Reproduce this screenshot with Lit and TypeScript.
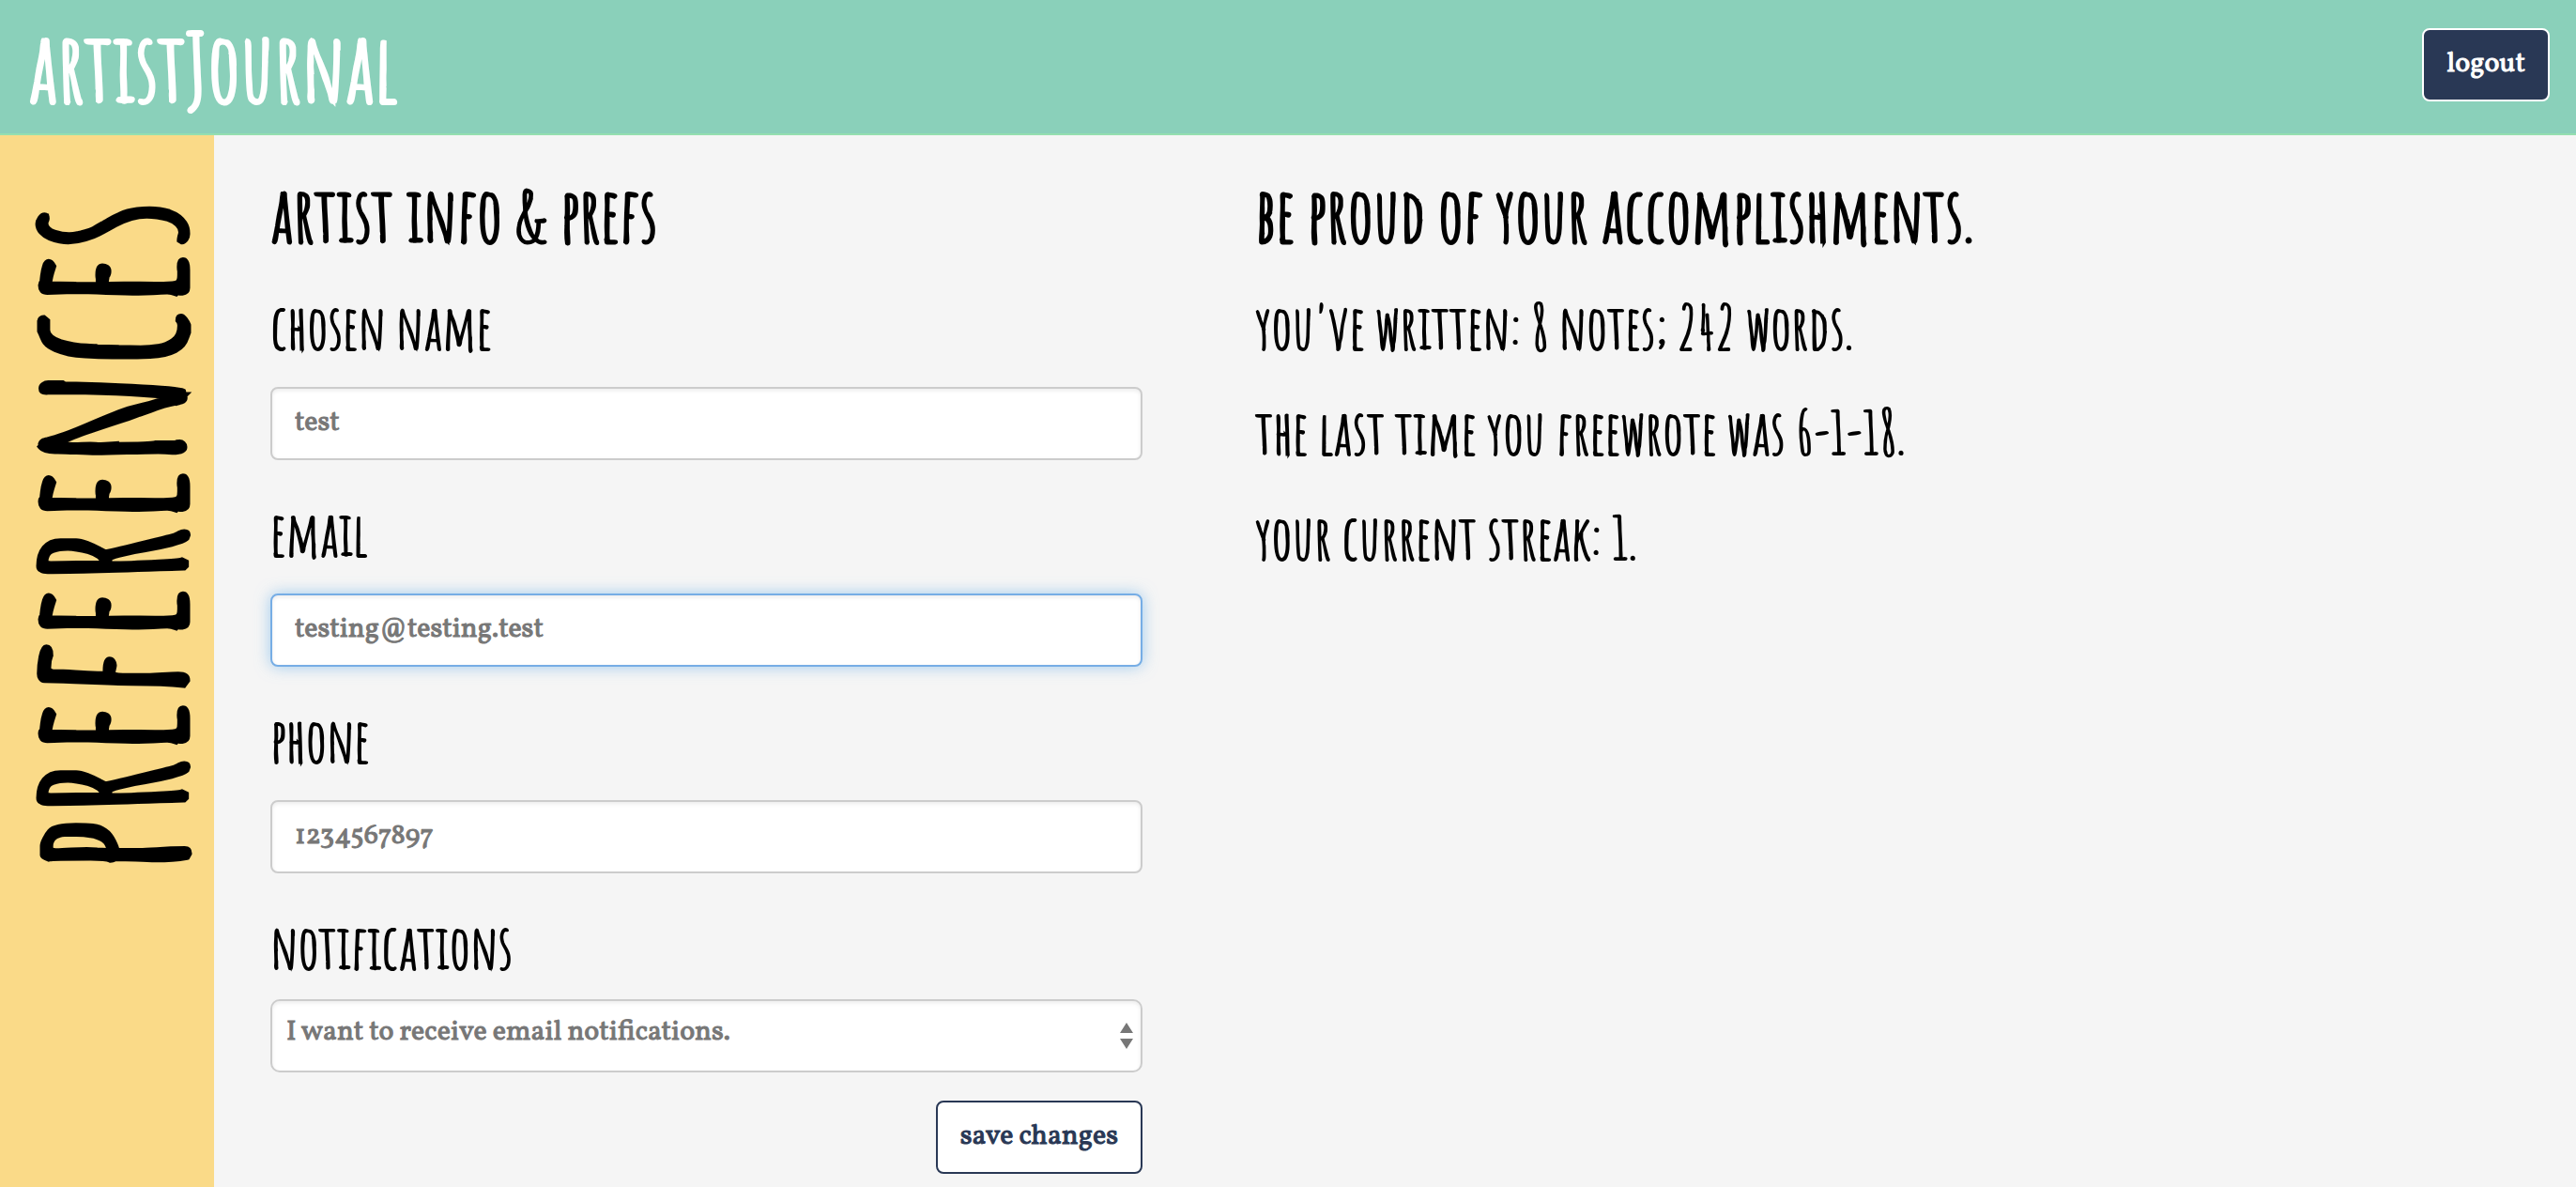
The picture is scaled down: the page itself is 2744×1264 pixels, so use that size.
import { LitElement, html, css } from "lit";
import { customElement, property } from "lit/decorators.js";
import { classMap } from "lit/directives/class-map.js";

interface Field {
  id: string;
  label: string;
  type: string;
  placeholder: string;
  active?: boolean;
}

@customElement("journal-header")
class JournalHeader extends LitElement {
  static styles = css`
    :host {
      display: block;
    }
    .bar {
      display: flex;
      justify-content: space-between;
      align-items: flex-start;
      padding: 0 28px 0 30px;
      background: #8ad0ba;
      border-bottom: 2px solid #94dfb0;
    }
    .brand {
      font: 400 100px/142px "Amatic SC", "Liberation Sans", sans-serif;
      -webkit-text-stroke: 4px currentColor;
      color: #fff;
      text-decoration: none;
    }
    .logout {
      margin-top: 30px;
      padding: 15px 24px 17px;
      border: 2px solid #fff;
      border-radius: 8px;
      background: #293855;
      color: #fff;
      font: 400 30px/42px "Vollkorn", "Liberation Serif", serif;
      -webkit-text-stroke: 1px currentColor;
    }
  `;

  render() {
    return html`
      <header class="bar">
        <a class="brand" href="#">artistJournal</a>
        <button class="logout" type="button">logout</button>
      </header>
    `;
  }
}

@customElement("prefs-form")
class PrefsForm extends LitElement {
  static styles = css`
    :host {
      display: block;
    }
    .title {
      margin: 0;
      font: 400 78px/96px "Amatic SC", "Liberation Sans", sans-serif;
      -webkit-text-stroke: 3px currentColor;
    }
    .field {
      display: flex;
      flex-direction: column;
      margin-bottom: 28px;
    }
    .label {
      padding: 12px 0 24px;
      font: 400 64px/76px "Amatic SC", "Liberation Sans", sans-serif;
      -webkit-text-stroke: 2px currentColor;
    }
    .fields {
      padding-top: 22px;
    }
    .control {
      box-sizing: border-box;
      width: 100%;
      height: 78px;
      margin: 2px 0 0;
      padding: 15px 24px 17px;
      border: 2px solid #ccc;
      border-radius: 8px;
      outline: none;
      background: #fff;
      box-shadow: inset 0 2px 4px rgba(0, 0, 0, 0.08);
      color: #777;
      font: 400 30px/42px "Vollkorn", "Liberation Serif", serif;
      -webkit-text-stroke: 1px currentColor;
    }
    .control::placeholder {
      color: #777;
      opacity: 1;
    }
    .control.active,
    .control:focus {
      border-color: #76ade5;
      box-shadow: inset 0 2px 4px rgba(0, 0, 0, 0.08), 0 0 16px rgba(102, 175, 233, 0.6);
    }
    .choice {
      margin-bottom: 30px;
    }
    .choice .label {
      padding-bottom: 18px;
    }
    .select-wrap {
      display: grid;
      align-items: center;
    }
    .select-wrap > * {
      grid-area: 1 / 1;
    }
    .select {
      appearance: none;
      margin: 0;
      padding: 12px 15px 20px;
      border-radius: 10px;
    }
    .arrows {
      justify-self: end;
      margin-right: 10px;
      pointer-events: none;
    }
    .actions {
      display: flex;
      justify-content: flex-end;
    }
    .save {
      padding: 15px 24px 17px;
      border: 2px solid #293855;
      border-radius: 8px;
      background: #fff;
      color: #293855;
      font: 400 30px/42px "Vollkorn", "Liberation Serif", serif;
      -webkit-text-stroke: 1px currentColor;
    }
  `;

  @property({ attribute: false }) fields: Field[] = [
    { id: "name", label: "chosen name", type: "text", placeholder: "test" },
    { id: "email", label: "email", type: "email", placeholder: "testing@testing.test", active: true },
    { id: "phone", label: "phone", type: "tel", placeholder: "1234567897" },
  ];

  render() {
    return html`
      <h2 class="title">artist info &amp; prefs</h2>
      <form class="fields" @submit=${(e: Event) => e.preventDefault()}>
        ${this.fields.map(
          (f) => html`
            <div class="field">
              <label class="label" for=${f.id}>${f.label}</label>
              <input
                class=${classMap({ control: true, active: !!f.active })}
                id=${f.id}
                type=${f.type}
                placeholder=${f.placeholder}
              />
            </div>
          `,
        )}
        <div class="field choice">
          <label class="label" for="notifications">notifications</label>
          <div class="select-wrap">
            <select class="control select" id="notifications">
              <option>I want to receive email notifications.</option>
            </select>
            <svg class="arrows" width="14" height="28" viewBox="0 0 14 28" aria-hidden="true">
              <path d="M7 0 L14 11 H0 Z M0 17 H14 L7 28 Z" fill="#777" />
            </svg>
          </div>
        </div>
        <div class="actions">
          <button class="save" type="submit">save changes</button>
        </div>
      </form>
    `;
  }
}

@customElement("journal-stats")
class JournalStats extends LitElement {
  static styles = css`
    :host {
      display: block;
    }
    .title {
      margin: 0 0 34px;
      font: 400 78px/96px "Amatic SC", "Liberation Sans", sans-serif;
      -webkit-text-stroke: 3px currentColor;
    }
    .line {
      margin: 0 0 36px;
      font: 400 64px/76px "Amatic SC", "Liberation Sans", sans-serif;
      -webkit-text-stroke: 2px currentColor;
    }
  `;

  @property({ attribute: false }) lines: string[] = [
    "you've written: 8 notes; 242 words.",
    "the last time you freewrote was 6-1-18.",
    "your current streak: 1.",
  ];

  render() {
    return html`
      <h2 class="title">be proud of your accomplishments.</h2>
      ${this.lines.map((l) => html`<p class="line">${l}</p>`)}
    `;
  }
}

@customElement("app-root")
class AppRoot extends LitElement {
  static styles = css`
    :host {
      display: flex;
      flex-direction: column;
      min-height: 100vh;
      background: #f5f5f5;
      color: #000;
    }
    .page {
      display: flex;
      flex: 1;
    }
    .side {
      flex: none;
      padding: 68px 14px 0 0;
      background: #fada88;
    }
    .side-title {
      margin: 0;
      writing-mode: vertical-rl;
      transform: rotate(180deg);
      font: 400 230px/214px "Amatic SC", "Liberation Sans", sans-serif;
      -webkit-text-stroke: 7px currentColor;
    }
    .content {
      display: flex;
      flex: 1;
      min-width: 0;
      padding-top: 36px;
    }
    .form-col {
      box-sizing: border-box;
      flex: 0 0 41.7%;
      padding: 0 60px;
    }
    .stats-col {
      flex: 1;
      padding: 0 60px;
    }
  `;

  render() {
    return html`
      <journal-header></journal-header>
      <div class="page">
        <aside class="side"><h1 class="side-title">preferences</h1></aside>
        <main class="content">
          <prefs-form class="form-col"></prefs-form>
          <journal-stats class="stats-col"></journal-stats>
        </main>
      </div>
    `;
  }
}
